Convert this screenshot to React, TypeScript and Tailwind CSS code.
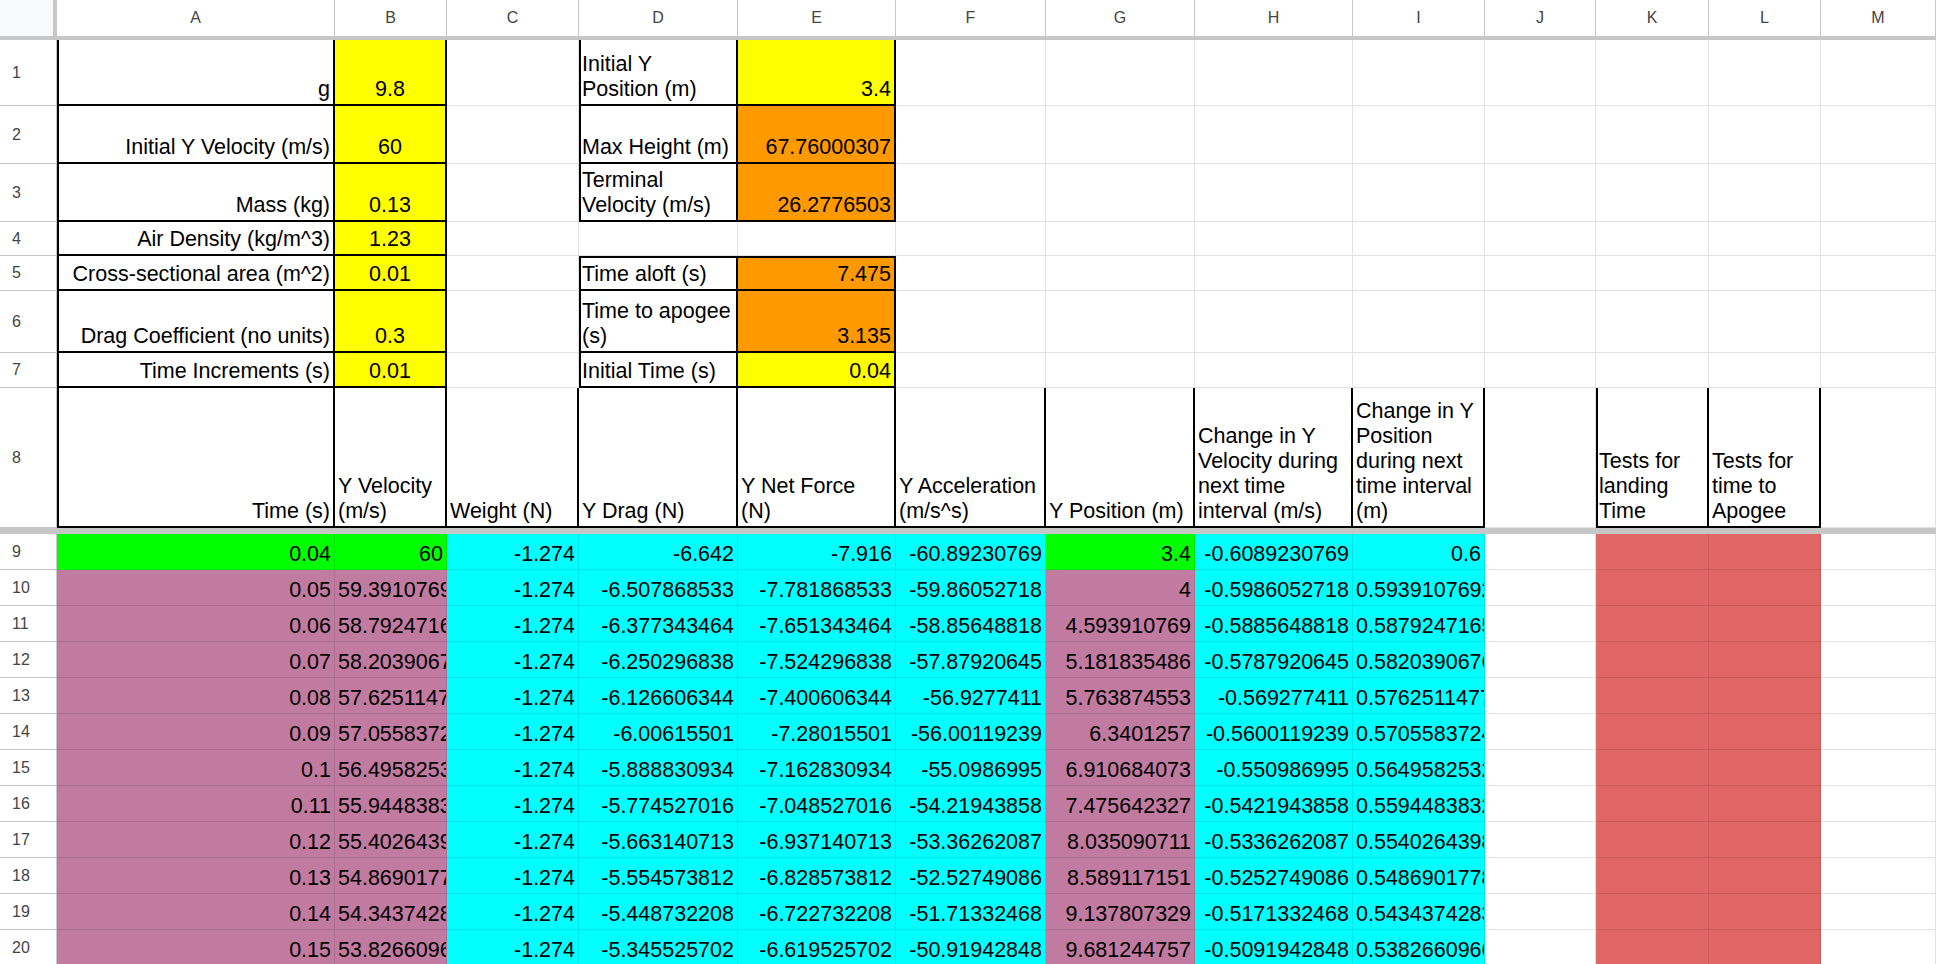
import React from 'react'

const cols = ['A', 'B', 'C', 'D', 'E', 'F', 'G', 'H', 'I', 'J', 'K', 'L', 'M']
const colW = '57px 278px 112px 132px 159px 158px 150px 149px 158px 132px 111px 113px 112px 115px'

type C = {
  t?: string
  bg?: string
  b?: boolean
  bl?: boolean
  bt?: boolean
  al?: 'r' | 'l' | 'c'
  clip?: boolean
}

const Y = 'bg-[#ffff00]'
const O = 'bg-[#ff9900]'
const G = 'bg-[#00ff00]'
const CY = 'bg-[#00ffff]'
const P = 'bg-[#c27ba0]'
const R = 'bg-[#e06666]'

function Cell({ c }: { c: C }) {
  const align = c.al === 'c' ? 'justify-center text-center' : c.al === 'l' ? 'justify-start text-left' : 'justify-end text-right'
  const border = c.b ? 'border-r-2 border-b-2 border-black' : c.bg ? 'border-r border-b border-black/10' : 'border-r border-b border-[#e2e2e2]'
  const shadow =
    c.bl && c.bt
      ? 'shadow-[inset_2px_2px_0_0_black]'
      : c.bl
        ? 'shadow-[inset_2px_0_0_0_black]'
        : c.bt
          ? 'shadow-[inset_0_2px_0_0_black]'
          : ''
  return (
    <div className={`flex items-end overflow-hidden px-[3px] pb-[2px] leading-[25px] ${c.clip ? 'whitespace-nowrap' : ''} ${align} ${border} ${shadow} ${c.bg ?? ''}`}>
      <span>{c.t}</span>
    </div>
  )
}

const e: C = {}

const top: C[][] = [
  [{ t: 'g', b: true, bl: true }, { t: '9.8', bg: Y, b: true, al: 'c' }, e, { t: 'Initial Y Position (m)', b: true, bl: true, al: 'l' }, { t: '3.4', bg: Y, b: true }],
  [{ t: 'Initial Y Velocity (m/s)', b: true, bl: true }, { t: '60', bg: Y, b: true, al: 'c' }, e, { t: 'Max Height (m)', b: true, bl: true, al: 'l' }, { t: '67.76000307', bg: O, b: true }],
  [{ t: 'Mass (kg)', b: true, bl: true }, { t: '0.13', bg: Y, b: true, al: 'c' }, e, { t: 'Terminal Velocity (m/s)', b: true, bl: true, al: 'l' }, { t: '26.2776503', bg: O, b: true }],
  [{ t: 'Air Density (kg/m^3)', b: true, bl: true }, { t: '1.23', bg: Y, b: true, al: 'c' }, e, e, e],
  [{ t: 'Cross-sectional area (m^2)', b: true, bl: true }, { t: '0.01', bg: Y, b: true, al: 'c' }, e, { t: 'Time aloft (s)', b: true, bl: true, bt: true, al: 'l' }, { t: '7.475', bg: O, b: true, bt: true }],
  [{ t: 'Drag Coefficient (no units)', b: true, bl: true }, { t: '0.3', bg: Y, b: true, al: 'c' }, e, { t: 'Time to apogee (s)', b: true, bl: true, al: 'l' }, { t: '3.135', bg: O, b: true }],
  [{ t: 'Time Increments (s)', b: true, bl: true }, { t: '0.01', bg: Y, b: true, al: 'c' }, e, { t: 'Initial Time (s)', b: true, bl: true, al: 'l' }, { t: '0.04', bg: Y, b: true }],
]

const hdr: C[] = [
  { t: 'Time (s)', b: true, bl: true },
  { t: 'Y Velocity (m/s)', b: true, al: 'l' },
  { t: 'Weight (N)', b: true, al: 'l' },
  { t: 'Y Drag (N)', b: true, al: 'l' },
  { t: 'Y Net Force (N)', b: true, al: 'l' },
  { t: 'Y Acceleration (m/s^s)', b: true, al: 'l' },
  { t: 'Y Position (m)', b: true, al: 'l' },
  { t: 'Change in Y Velocity during next time interval (m/s)', b: true, al: 'l' },
  { t: 'Change in Y Position during next time interval (m)', b: true, al: 'l' },
  e,
  { t: 'Tests for landing Time', b: true, bl: true, al: 'l' },
  { t: 'Tests for time to Apogee', b: true, al: 'l' },
  e,
]

const data = [
  ['0.04', '60', '-1.274', '-6.642', '-7.916', '-60.89230769', '3.4', '-0.6089230769', '0.6'],
  ['0.05', '59.3910769', '-1.274', '-6.507868533', '-7.781868533', '-59.86052718', '4', '-0.5986052718', '0.5939107692'],
  ['0.06', '58.7924716', '-1.274', '-6.377343464', '-7.651343464', '-58.85648818', '4.593910769', '-0.5885648818', '0.5879247165'],
  ['0.07', '58.2039067', '-1.274', '-6.250296838', '-7.524296838', '-57.87920645', '5.181835486', '-0.5787920645', '0.5820390676'],
  ['0.08', '57.6251147', '-1.274', '-6.126606344', '-7.400606344', '-56.9277411', '5.763874553', '-0.569277411', '0.5762511477'],
  ['0.09', '57.0558372', '-1.274', '-6.00615501', '-7.28015501', '-56.00119239', '6.3401257', '-0.5600119239', '0.5705583724'],
  ['0.1', '56.4958253', '-1.274', '-5.888830934', '-7.162830934', '-55.0986995', '6.910684073', '-0.550986995', '0.5649582532'],
  ['0.11', '55.9448383', '-1.274', '-5.774527016', '-7.048527016', '-54.21943858', '7.475642327', '-0.5421943858', '0.5594483832'],
  ['0.12', '55.4026439', '-1.274', '-5.663140713', '-6.937140713', '-53.36262087', '8.035090711', '-0.5336262087', '0.5540264398'],
  ['0.13', '54.8690177', '-1.274', '-5.554573812', '-6.828573812', '-52.52749086', '8.589117151', '-0.5252749086', '0.5486901778'],
  ['0.14', '54.3437428', '-1.274', '-5.448732208', '-6.722732208', '-51.71332468', '9.137807329', '-0.5171332468', '0.5434374283'],
  ['0.15', '53.8266096', '-1.274', '-5.345525702', '-6.619525702', '-50.91942848', '9.681244757', '-0.5091942848', '0.5382660966'],
  ['0.16', '53.3174153', '-1.274', '-5.245', '-6.519', '-50.1', '10.21', '-0.501', '0.533'],
]

function dataRow(v: string[], i: number): C[] {
  const first = i === 0
  const ab = first ? G : P
  return [
    { t: v[0], bg: ab },
    { t: v[1], bg: ab, al: first ? 'r' : 'l', clip: true },
    { t: v[2], bg: CY },
    { t: v[3], bg: CY },
    { t: v[4], bg: CY },
    { t: v[5], bg: CY },
    { t: v[6], bg: ab },
    { t: v[7], bg: CY, clip: true },
    { t: v[8], bg: CY, al: first ? 'r' : 'l', clip: true },
    e,
    { bg: R },
    { bg: R },
    e,
  ]
}

function RowNum({ n }: { n: number }) {
  return (
    <div className="flex items-center pl-[12px] text-[16px] text-[#444] bg-white border-r border-b border-[#c7c7c7]">{n}</div>
  )
}

export default function App() {
  const pad = (r: C[]) => [...r, ...Array(13 - r.length).fill(e)]
  const rowsTop = top.map(pad)
  return (
    <div className="w-[1936px] h-[964px] overflow-hidden bg-white text-[21.5px] text-black" style={{ fontFamily: '"Liberation Sans", Arial, sans-serif' }}>
      <div className="grid" style={{ gridTemplateColumns: colW, gridTemplateRows: '40px 66px 58px 58px 34px 35px 62px 35px 140px' }}>
        <div className="bg-[#f8f9fa] border-r-4 border-b-4 border-[#c7c7c7]" />
        {cols.map((c) => (
          <div key={c} className="flex items-center justify-center text-[16px] text-[#444] bg-white border-r border-b-4 border-[#c7c7c7]">{c}</div>
        ))}
        {rowsTop.map((r, i) => (
          <React.Fragment key={i}>
            <RowNum n={i + 1} />
            {r.map((c, j) => <Cell key={j} c={c} />)}
          </React.Fragment>
        ))}
        <RowNum n={8} />
        {hdr.map((c, j) => <Cell key={j} c={c} />)}
      </div>
      <div className="h-[6px] bg-[#c7c7c7]" />
      <div className="grid" style={{ gridTemplateColumns: colW, gridAutoRows: '36px' }}>
        {data.map((v, i) => (
          <React.Fragment key={i}>
            <RowNum n={i + 9} />
            {dataRow(v, i).map((c, j) => <Cell key={j} c={c} />)}
          </React.Fragment>
        ))}
      </div>
    </div>
  )
}
